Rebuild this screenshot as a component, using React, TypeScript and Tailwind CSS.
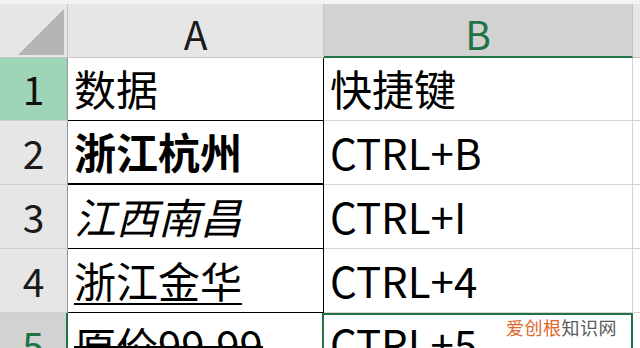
import React from 'react';

const font = { fontFamily: '"Noto Sans CJK SC", "Noto Sans", sans-serif' };

type Row = {
  n: number;
  a: string;
  aClass: string;
  b: string;
};

const rows: Row[] = [
  { n: 1, a: '数据', aClass: '', b: '快捷键' },
  { n: 2, a: '浙江杭州', aClass: 'font-bold', b: 'CTRL+B' },
  { n: 3, a: '江西南昌', aClass: 'italic', b: 'CTRL+I' },
  { n: 4, a: '浙江金华', aClass: 'underline decoration-2 underline-offset-[5px]', b: 'CTRL+4' },
  { n: 5, a: '原价99.99', aClass: 'line-through decoration-2', b: 'CTRL+5' },
];

const App: React.FC = () => {
  return (
    <div className="relative w-[640px] h-[348px] overflow-hidden bg-white text-black" style={font}>
      <div className="h-[4px] bg-[#f3f3f3]" />
      <div className="grid grid-cols-[68px_256px_309px_1fr] grid-rows-[54px_63px_64px_64px_64px_64px]">
        {/* header row */}
        <div className="bg-[#e6e6e6] border-r border-b border-[#c4c4c4] flex items-end justify-end pr-[2px] pb-[2px]">
          <svg width="47" height="46" viewBox="0 0 47 46">
            <polygon points="0,46 46,0 46,46" fill="#b4b4b4" />
          </svg>
        </div>
        <div className="bg-[#e6e6e6] border-r border-b border-[#c4c4c4] flex items-end justify-center pb-[4px] text-[39px] leading-none text-[#1a1a1a]">
          A
        </div>
        <div className="bg-[#d2d2d2] border-r border-[#c4c4c4] border-b-2 border-b-[#217346] flex items-end justify-center pb-[3px] text-[39px] leading-none text-[#217346]">
          B
        </div>
        <div className="bg-[#e6e6e6] border-b border-[#c4c4c4]" />

        {rows.map((r) => {
          const selected = r.n === 5;
          const headerBg = r.n === 1 ? 'bg-[#9fd5b7] text-[#111]' : selected ? 'bg-[#d2d2d2] text-[#217346]' : 'bg-[#e6e6e6] text-[#1a1a1a]';
          const headerBorder = selected ? 'border-r-2 border-r-[#217346]' : 'border-r border-r-[#9a9a9a]';
          return (
            <React.Fragment key={r.n}>
              <div
                className={`${headerBg} ${headerBorder} border-b border-b-[#cfcfcf] flex items-end justify-center pb-[12px] text-[39px] leading-none`}
              >
                {r.n}
              </div>
              <div
                className={`${selected ? 'border-r-2 border-r-[#217346]' : 'border-r border-r-black border-b border-b-black'} ${r.n === 2 ? 'border-b-2 border-b-[#6b6b6b]' : ''} flex items-end pl-[6px] pb-[11px] text-[42px] leading-none`}
              >
                <span className={r.aClass}>{r.a}</span>
              </div>
              <div
                className={`${selected ? 'border-2 border-[#217346] border-l-0' : 'border-r border-b border-[#d4d4d4]'} flex items-end pl-[6px] pb-[11px] text-[42px] leading-none`}
              >
                {r.b}
              </div>
              <div className="border-b border-[#d4d4d4]" />
            </React.Fragment>
          );
        })}
      </div>

      <div className="absolute left-[506px] top-[318px] text-[18px] leading-none tracking-[0.5px]">
        <span className="text-[#e2662a]">爱创根</span>
        <span className="text-[#5a5a5a]">知识网</span>
      </div>
    </div>
  );
};

export default App;
